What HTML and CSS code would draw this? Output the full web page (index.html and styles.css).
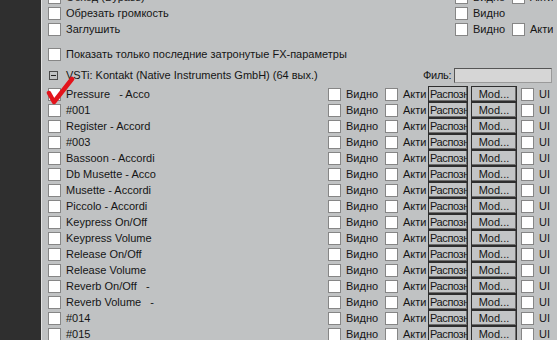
FILE: index.html
```html
<!DOCTYPE html>
<html>

<head>
  <meta charset="utf-8" />
  <title>FX-параметры</title>
  <link rel="stylesheet" href="styles.css">
</head>

<body>
  <div class="window">
    <div class="sidebar"></div>

    <div class="panel">
      <div class="top-rows">
        <div class="row">
          <label class="opt opt-main"><span class="box"></span>Обход (Bypass)</label>
          <label class="opt opt-vis"><span class="box"></span>Видно</label>
          <label class="opt"><span class="box"></span>Акти</label>
        </div>
        <div class="row">
          <label class="opt opt-main"><span class="box"></span>Обрезать громкость</label>
          <label class="opt opt-vis"><span class="box"></span>Видно</label>
        </div>
        <div class="row">
          <label class="opt opt-main"><span class="box"></span>Заглушить</label>
          <label class="opt opt-vis"><span class="box"></span>Видно</label>
          <label class="opt"><span class="box"></span>Акти</label>
        </div>
      </div>

      <div class="row row-last">
        <label class="opt"><span class="box"></span>Показать только последние затронутые FX-параметры</label>
      </div>

      <div class="row row-plugin">
        <span class="collapse"></span>
        <span class="plugin-name">VSTi: Kontakt (Native Instruments GmbH) (64 вых.)</span>
        <span class="filter-label">Филь:</span>
        <input class="filter" type="text">
      </div>

      <div class="params">
        <!-- rows are filled by the script -->
      </div>

      <svg class="tick" width="40" height="40" viewBox="0 0 40 40">
        <path d="M6 17 L11 26 L29 3" />
      </svg>
    </div>
  </div>

  <script>
    (function () {
      const params = document.querySelector('.params');
      var names = ["Pressure \u00a0 - Acco", "#001", "Register - Accord", "#003", "Bassoon - Accordi", "Db Musette - Acco",
        "Musette - Accordi", "Piccolo - Accordi", "Keypress On/Off", "Keypress Volume", "Release On/Off",
        "Release Volume", "Reverb On/Off \u00a0 -", "Reverb Volume \u00a0 -", "#014", "#015"];

      for (var i = 0; i < names.length; i++) {
        params.innerHTML += `
          <div class="row param">
            <label class="opt p-name"><span class="box"></span>${names[i]}</label>
            <label class="opt p-vis"><span class="box"></span>Видно</label>
            <label class="opt p-act"><span class="box"></span>Акти</label>
            <span class="btn btn-learn">Распозн</span>
            <span class="btn btn-mod">Mod...</span>
            <label class="opt"><span class="box"></span>UI</label>
          </div>
        `;
      }
    })();
  </script>
</body>

</html>
```

FILE: styles.css
```css
* {
  box-sizing: border-box;
}

body {
  margin: 0;
  width: 557px;
  height: 340px;
  overflow: hidden;
  font-family: "Liberation Sans", Arial, sans-serif;
  font-size: 11px;
  color: #151515;
}

.window {
  display: flex;
  height: 340px;
}

.sidebar {
  width: 42px;
  flex-shrink: 0;
  background: #2f2f2f;
  border-right: 1px solid #e2e2e2;
}

.panel {
  flex: 1;
  position: relative;
  background: #c0c2c3;
  padding-left: 6px;
  overflow: hidden;
}

.row {
  display: flex;
  align-items: center;
  height: 16px;
  white-space: nowrap;
}

.top-rows {
  margin-top: -11px;
}

.row-last {
  margin-top: 9px;
}

.opt {
  display: flex;
  align-items: center;
  overflow: hidden;
}

.box {
  width: 13px;
  height: 13px;
  margin-right: 5px;
  flex-shrink: 0;
  background: #fff;
  border: 1px solid #868686;
}

.opt-main {
  width: 407px;
}

.opt-vis {
  width: 57px;
}

/* plugin header */
.row-plugin {
  margin-top: 5px;
}

.collapse {
  position: relative;
  width: 9px;
  height: 9px;
  margin: 0 8px 0 1px;
  border: 1px solid #4a4a4a;
}

.collapse::after {
  content: "";
  position: absolute;
  left: 1px;
  right: 1px;
  top: 3px;
  height: 1px;
  background: #222;
}

.plugin-name {
  width: 357px;
}

.filter-label {
  width: 31px;
  letter-spacing: -0.3px;
  overflow: hidden;
}

.filter {
  width: 98px;
  height: 15px;
  margin: 0;
  padding: 0;
  background: #d6d6d6;
  border: 1px solid #9a9a9a;
  border-top-color: #555;
  border-left-color: #555;
}

/* parameter rows */
.params {
  margin-top: 3px;
}

.p-name {
  width: 280px;
}

.p-vis {
  width: 57px;
}

.p-act {
  width: 43px;
}

.btn {
  height: 16px;
  line-height: 14px;
  overflow: hidden;
  border: 1px solid #2e2e2e;
  box-shadow: inset -1px -1px 0 #6e6e6e;
  background: #c3c5c6;
}

.btn-learn {
  width: 40px;
  padding-left: 1px;
  margin-right: 3px;
  letter-spacing: -0.4px;
}

.btn-mod {
  width: 46px;
  text-align: center;
  margin-right: 4px;
}

.tick {
  position: absolute;
  left: 1px;
  top: 76px;
}

.tick path {
  fill: none;
  stroke: #e3141c;
  stroke-width: 4.5;
  stroke-linecap: round;
  stroke-linejoin: round;
}
```
